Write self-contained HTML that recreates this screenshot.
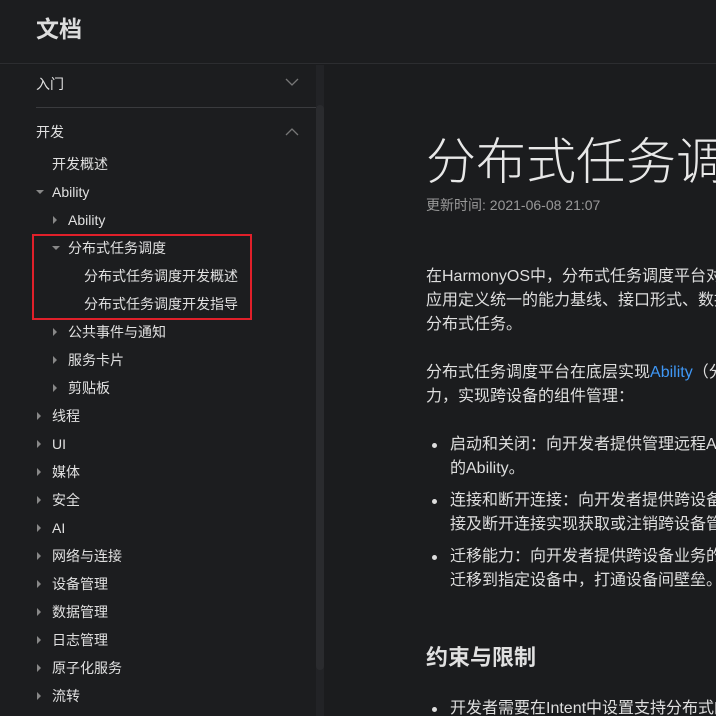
<!DOCTYPE html>
<html><head><meta charset="utf-8"><style>
*{margin:0;padding:0;box-sizing:border-box}
html,body{width:716px;height:716px;overflow:hidden}
body{background:#1b1c1e;font-family:"Liberation Sans","Noto Sans CJK SC",sans-serif;color:#e6e6e6;position:relative}
.wrap{position:absolute;left:0;top:0;width:716px;height:716px;overflow:hidden}
.hdr{position:absolute;left:0;top:0;width:716px;height:64px;border-bottom:1px solid #2c2d30;background:#1c1d1f}
.hdr b{position:absolute;left:36px;top:10px;font-size:23px;color:#dcdcdc}
.side{position:absolute;left:0;top:65px;width:316px;height:651px;background:#1c1d1f}
.track{position:absolute;left:316px;top:65px;width:8px;height:651px;background:#222326}
.thumb{position:absolute;left:316px;top:105px;width:8px;height:565px;background:#2a2b2e;border-radius:4px}
.it{position:absolute;font-size:14px;color:#e0e0e0;line-height:20px;white-space:nowrap;margin-top:1px}
.tri{position:absolute;width:0;height:0;margin-top:1px}
.tr{border-top:4px solid transparent;border-bottom:4px solid transparent;border-left:4px solid #888}
.td{border-left:4px solid transparent;border-right:4px solid transparent;border-top:4px solid #888}
.sep{position:absolute;left:36px;top:107px;width:280px;height:1px;background:#3a3b3e}
.red{position:absolute;left:32px;top:234px;width:220px;height:86px;border:2px solid #e0202a}
.c{position:absolute;left:426px;white-space:nowrap;font-size:16px;color:#dedede;line-height:24px}
.dot{position:absolute;left:432px;width:5px;height:5px;border-radius:50%;background:#ddd}
</style></head><body><div class="wrap">
<div class="hdr"><b>文档</b></div>
<div class="side"></div>
<div class="track"></div><div class="thumb"></div>
<div class="it" style="left:36px;top:73px">入门</div>
<svg style="position:absolute;left:285px;top:78px" width="14" height="9"><path d="M1 1L7 7L13 1" stroke="#777" fill="none" stroke-width="1.3"/></svg>
<div class="sep"></div>
<div class="it" style="left:36px;top:121px">开发</div>
<svg style="position:absolute;left:285px;top:127px" width="14" height="9"><path d="M1 8L7 2L13 8" stroke="#777" fill="none" stroke-width="1.3"/></svg>
<div class="it" style="left:52px;top:153px">开发概述</div>
<div class="tri td" style="left:36px;top:189px"></div>
<div class="it" style="left:52px;top:181px">Ability</div>
<div class="tri tr" style="left:53px;top:215px"></div>
<div class="it" style="left:68px;top:209px">Ability</div>
<div class="tri td" style="left:52px;top:245px"></div>
<div class="it" style="left:68px;top:237px">分布式任务调度</div>
<div class="it" style="left:84px;top:265px">分布式任务调度开发概述</div>
<div class="it" style="left:84px;top:293px">分布式任务调度开发指导</div>
<div class="red"></div>
<div class="tri tr" style="left:53px;top:327px"></div><div class="it" style="left:68px;top:321px">公共事件与通知</div>
<div class="tri tr" style="left:53px;top:355px"></div><div class="it" style="left:68px;top:349px">服务卡片</div>
<div class="tri tr" style="left:53px;top:383px"></div><div class="it" style="left:68px;top:377px">剪贴板</div>
<div class="tri tr" style="left:37px;top:411px"></div><div class="it" style="left:52px;top:405px">线程</div>
<div class="tri tr" style="left:37px;top:439px"></div><div class="it" style="left:52px;top:433px">UI</div>
<div class="tri tr" style="left:37px;top:467px"></div><div class="it" style="left:52px;top:461px">媒体</div>
<div class="tri tr" style="left:37px;top:495px"></div><div class="it" style="left:52px;top:489px">安全</div>
<div class="tri tr" style="left:37px;top:523px"></div><div class="it" style="left:52px;top:517px">AI</div>
<div class="tri tr" style="left:37px;top:551px"></div><div class="it" style="left:52px;top:545px">网络与连接</div>
<div class="tri tr" style="left:37px;top:579px"></div><div class="it" style="left:52px;top:573px">设备管理</div>
<div class="tri tr" style="left:37px;top:607px"></div><div class="it" style="left:52px;top:601px">数据管理</div>
<div class="tri tr" style="left:37px;top:635px"></div><div class="it" style="left:52px;top:629px">日志管理</div>
<div class="tri tr" style="left:37px;top:663px"></div><div class="it" style="left:52px;top:657px">原子化服务</div>
<div class="tri tr" style="left:37px;top:691px"></div><div class="it" style="left:52px;top:685px">流转</div>

<div class="c" style="top:131px;font-size:50px;line-height:62px;font-weight:300;color:#e8e8e8">分布式任务调度开发概述</div>
<div class="c" style="top:195px;font-size:14px;line-height:20px;color:#999">更新时间: 2021-06-08 21:07</div>
<div class="c" style="top:265px">在HarmonyOS中，分布式任务调度平台对搭载HarmonyOS的多设备构筑的“超级虚拟终端”提供统一的组件管理能力</div>
<div class="c" style="top:289px">应用定义统一的能力基线、接口形式、数据结构、服务描述语言，屏蔽硬件差异</div>
<div class="c" style="top:313px">分布式任务。</div>
<div class="c" style="top:361px">分布式任务调度平台在底层实现<span style="color:#3f97f5">Ability</span>（分布式任务调度的基本组件）跨设备的启动</div>
<div class="c" style="top:385px">力，实现跨设备的组件管理：</div>
<div class="dot" style="top:443px"></div>
<div class="c" style="left:450px;top:433px">启动和关闭：向开发者提供管理远程Ability的能力，即支持启动Page模板</div>
<div class="c" style="left:450px;top:457px">的Ability。</div>
<div class="dot" style="top:499px"></div>
<div class="c" style="left:450px;top:489px">连接和断开连接：向开发者提供跨设备控制服务（Service和Data模板</div>
<div class="c" style="left:450px;top:513px">接及断开连接实现获取或注销跨设备管理服务的对象</div>
<div class="dot" style="top:555px"></div>
<div class="c" style="left:450px;top:545px">迁移能力：向开发者提供跨设备业务的无缝迁移能力</div>
<div class="c" style="left:450px;top:569px">迁移到指定设备中，打通设备间壁垒。</div>
<div class="c" style="top:643px;font-size:22px;line-height:30px;font-weight:bold;color:#e0e0e0">约束与限制</div>
<div class="dot" style="top:707px"></div>
<div class="c" style="left:450px;top:697px">开发者需要在Intent中设置支持分布式的标记</div>
</div></body></html>
